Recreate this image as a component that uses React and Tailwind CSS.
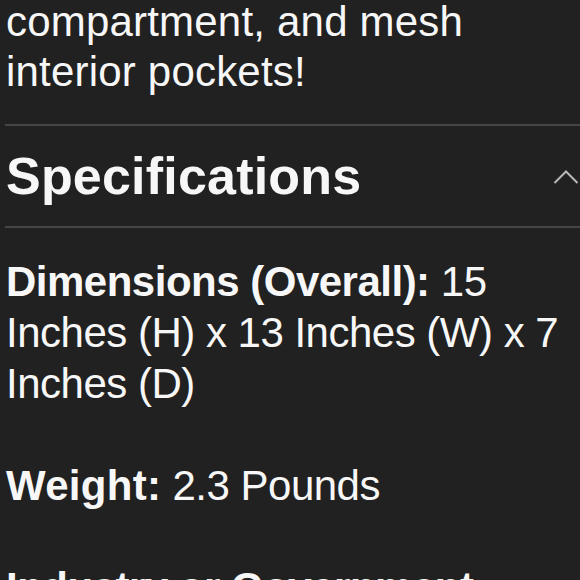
export default function App() {
  return (
    <div
      className="w-[580px] h-[580px] overflow-hidden bg-[#212121] text-[#f7f7f7]"
      style={{ fontFamily: '"Liberation Sans", Arial, sans-serif' }}
    >
      <div className="pl-[5px]">
        <p className="mt-[-3px] pl-[1px] text-[42px] leading-[50px] tracking-[0.2px]">
          compartment, and mesh interior pockets!
        </p>
        <div className="mt-[27px] border-t-2 border-[#464646]" />
        <div className="flex h-[100px] items-center justify-between pl-[1px]">
          <h2 className="text-[52px] font-bold leading-none tracking-[0.2px]">Specifications</h2>
          <svg width="26" height="16" viewBox="0 0 26 16" className="mr-[1px] mt-[2px]">
            <path d="M1.5 14 L13 2.5 L24.5 14" fill="none" stroke="#b8b8b8" strokeWidth="2" />
          </svg>
        </div>
        <div className="border-t-2 border-[#464646]" />
        <div className="pl-[1px] pt-[28px] text-[42px] leading-[51px] tracking-[-0.5px]">
          <p>
            <span className="font-bold">Dimensions (Overall):</span> 15 Inches (H) x 13 Inches (W) x 7 Inches (D)
          </p>
          <p className="mt-[51px]">
            <span className="font-bold tracking-[0.3px]">Weight:</span> 2.3 Pounds
          </p>
          <p className="mt-[51px]">
            <span className="font-bold">Industry or Government Certifications:</span> None
          </p>
        </div>
      </div>
    </div>
  );
}
